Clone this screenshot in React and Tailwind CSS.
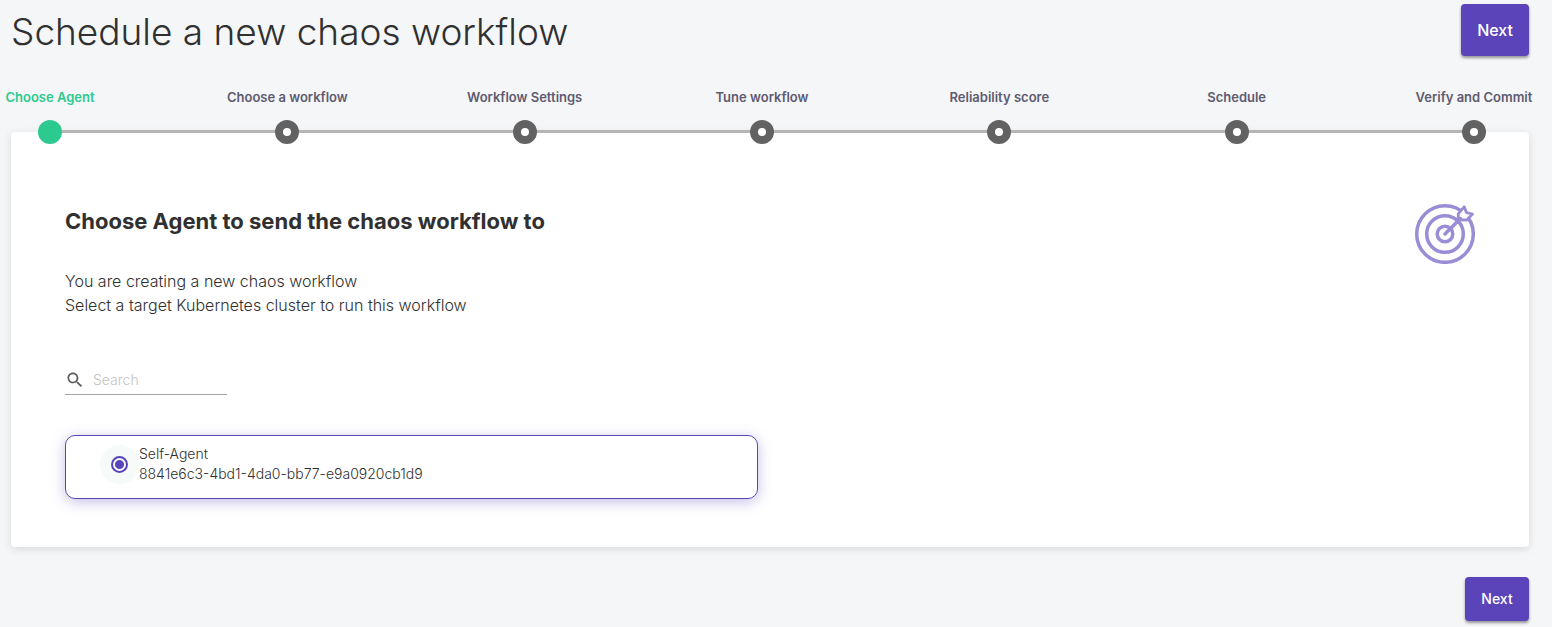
import { useState } from "react";

const steps = [
  "Choose Agent",
  "Choose a workflow",
  "Workflow Settings",
  "Tune workflow",
  "Reliability score",
  "Schedule",
  "Verify and Commit",
];

function Stepper({ active }) {
  return (
    <ol className="relative z-10 -mb-3 flex pr-[43px] pl-[27px]">
      {steps.map((label, i) => (
        <li key={label} className={i < steps.length - 1 ? "flex flex-1 items-end" : "flex items-end"}>
          <div className="flex w-6 flex-col items-center gap-[13px]">
            <span
              className={
                i === active
                  ? "text-[13px] leading-5 font-semibold whitespace-nowrap text-[#2cca8f]"
                  : "text-[13px] leading-5 font-semibold whitespace-nowrap text-[#5f5b70]"
              }
            >
              {label}
            </span>
            {i === active ? (
              <span className="size-6 rounded-full bg-[#2cca8f]" />
            ) : (
              <span className="size-6 rounded-full border-8 border-[#626262] bg-white" />
            )}
          </div>
          {i < steps.length - 1 && <span className="mb-[11px] h-[3px] flex-1 bg-[#b5b5b5]" />}
        </li>
      ))}
    </ol>
  );
}

function TargetIcon() {
  return (
    <svg
      viewBox="-1 -1 62 62"
      className="size-[62px] shrink-0"
      fill="none"
      stroke="#9b8cd6"
      strokeWidth="3.5"
      aria-hidden="true"
    >
      <circle cx="31" cy="31" r="28.3" />
      <circle cx="31" cy="31" r="18.3" />
      <circle cx="31" cy="31" r="7.8" />
      <path
        d="M44.4 16.8L44.2 10.8L50.2 3.8L52.4 9.6L58.6 11L52.6 17Z"
        fill="#ffffff"
        strokeWidth="2.8"
        strokeLinejoin="round"
      />
      <path d="M31 31L46.5 15.5" strokeLinecap="round" />
    </svg>
  );
}

export default function App() {
  const [agent, setAgent] = useState("self");
  return (
    <div className="min-h-screen bg-[#f4f6f8] pb-1.5 pl-[11px] pr-[23px] font-[Inter,sans-serif] text-[#303030]">
      <header className="flex items-start justify-between pt-1">
        <h1 className="pt-1 text-[37px] leading-12 font-light">Schedule a new chaos workflow</h1>
        <button
          type="button"
          className="h-13 min-w-16 rounded-[4px] bg-[#5b44ba] px-4 text-base font-medium text-white shadow-[0_2px_3px_rgba(0,0,0,0.4)]"
        >
          Next
        </button>
      </header>

      <div className="pt-[31px]">
        <Stepper active={0} />
        <main className="rounded-[4px] bg-white px-[54px] pt-[70px] pb-12 shadow-[0_2px_8px_rgba(0,0,0,0.12)]">
          <div className="flex items-start justify-between">
            <div>
              <h2 className="pt-[3px] text-[22px] leading-8 font-bold">Choose Agent to send the chaos workflow to</h2>
              <p className="mt-8 text-base leading-6 font-light">
                You are creating a new chaos workflow
                <br />
                Select a target Kubernetes cluster to run this workflow
              </p>
            </div>
            <TargetIcon />
          </div>

          <label className="mt-12 flex h-[30px] w-[162px] items-center border-b border-[#a5a5a5]">
            <svg viewBox="0 0 24 24" className="size-5 shrink-0" fill="#5c5c5c" aria-hidden="true">
              <path d="M15.5 14h-.79l-.28-.27C15.41 12.59 16 11.11 16 9.5 16 5.91 13.09 3 9.5 3S3 5.91 3 9.5 5.91 16 9.5 16c1.61 0 3.09-.59 4.23-1.57l.27.28v.79l5 4.99L20.49 19l-4.99-5zm-6 0C7.01 14 5 11.99 5 9.5S7.01 5 9.5 5 14 7.01 14 9.5 11.99 14 9.5 14z" />
            </svg>
            <input
              type="search"
              aria-label="Search"
              placeholder="Search"
              className="ml-2 w-full min-w-0 bg-transparent text-sm font-light outline-none placeholder:text-[#c3c3c3]"
            />
          </label>

          <label className="mt-10 flex h-16 max-w-[693px] items-start rounded-[10px] border border-[#5b44ba] pt-2 pl-[34px] shadow-[0_3px_14px_rgba(91,68,186,0.35)]">
            <span className="mt-px flex size-[39px] shrink-0 items-center justify-center rounded-full bg-[#f6faf9]">
              <input
                type="radio"
                name="agent"
                checked={agent === "self"}
                onChange={() => setAgent("self")}
                className="size-[17px] appearance-none rounded-full border-2 border-[#5b44ba] checked:bg-[radial-gradient(circle,#5b44ba_4px,transparent_5px)]"
              />
            </span>
            <span className="text-sm leading-5 font-light">
              Self-Agent
              <br />
              8841e6c3-4bd1-4da0-bb77-e9a0920cb1d9
            </span>
          </label>
        </main>
      </div>

      <footer className="flex justify-end pt-[30px]">
        <button
          type="button"
          className="h-11 min-w-16 rounded-[4px] bg-[#5b44ba] px-4 text-sm font-medium text-white shadow-[0_2px_3px_rgba(0,0,0,0.4)]"
        >
          Next
        </button>
      </footer>
    </div>
  );
}
